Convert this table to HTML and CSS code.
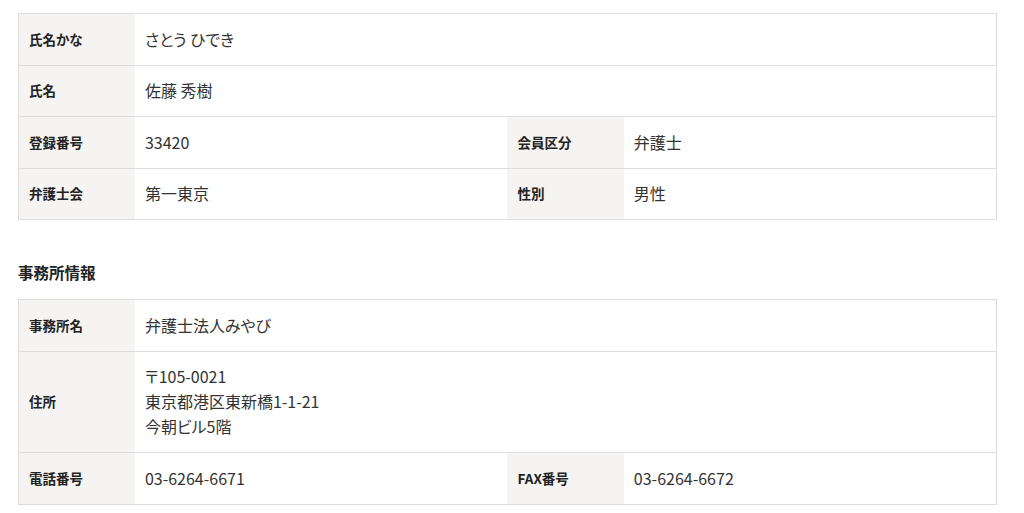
FILE: index.html
```html
<!DOCTYPE html>
<html lang="ja">
<head>
<meta charset="utf-8">
<link rel="stylesheet" href="styles.css">
</head>
<body>
<div class="page">
  <table class="info">
    <colgroup><col class="c-label"><col class="c-val"><col class="c-label"><col class="c-val"></colgroup>
    <tr><th>氏名かな</th><td colspan="3">さとう ひでき</td></tr>
    <tr><th>氏名</th><td colspan="3">佐藤 秀樹</td></tr>
    <tr><th>登録番号</th><td>33420</td><th>会員区分</th><td>弁護士</td></tr>
    <tr><th>弁護士会</th><td>第一東京</td><th>性別</th><td>男性</td></tr>
  </table>
  <h2 class="section-title">事務所情報</h2>
  <table class="info">
    <colgroup><col class="c-label"><col class="c-val"><col class="c-label"><col class="c-val"></colgroup>
    <tr><th>事務所名</th><td colspan="3">弁護士法人みやび</td></tr>
    <tr><th>住所</th><td colspan="3">〒105-0021<br>東京都港区東新橋1-1-21<br>今朝ビル5階</td></tr>
    <tr><th>電話番号</th><td>03-6264-6671</td><th>FAX番号</th><td>03-6264-6672</td></tr>
  </table>
</div>
</body>
</html>
```
FILE: styles.css
```css
html, body { margin: 0; padding: 0; background: #fff; }
body { font-family: "Noto Sans CJK JP", "Noto Sans", sans-serif; color: #333; font-feature-settings: "palt"; }
.page { padding: 13px 27px 0 18px; }
.info { width: 100%; border-collapse: collapse; table-layout: fixed; border: 1px solid #ddd; }
.c-label { width: 11.9%; }
.c-val { width: 38.1%; }
.info th, .info td { border-top: 1px solid #ddd; border-bottom: 1px solid #ddd; padding: 12.75px 10px; line-height: 25px; vertical-align: middle; text-align: left; }
.info th { background: #f6f4f2; font-size: 13.5px; font-weight: bold; color: #222; }
.info td { font-size: 16px; font-weight: normal; }
.section-title { font-size: 15.5px; font-weight: bold; line-height: 20px; margin: 42px 0 17px; color: #222; }
```
